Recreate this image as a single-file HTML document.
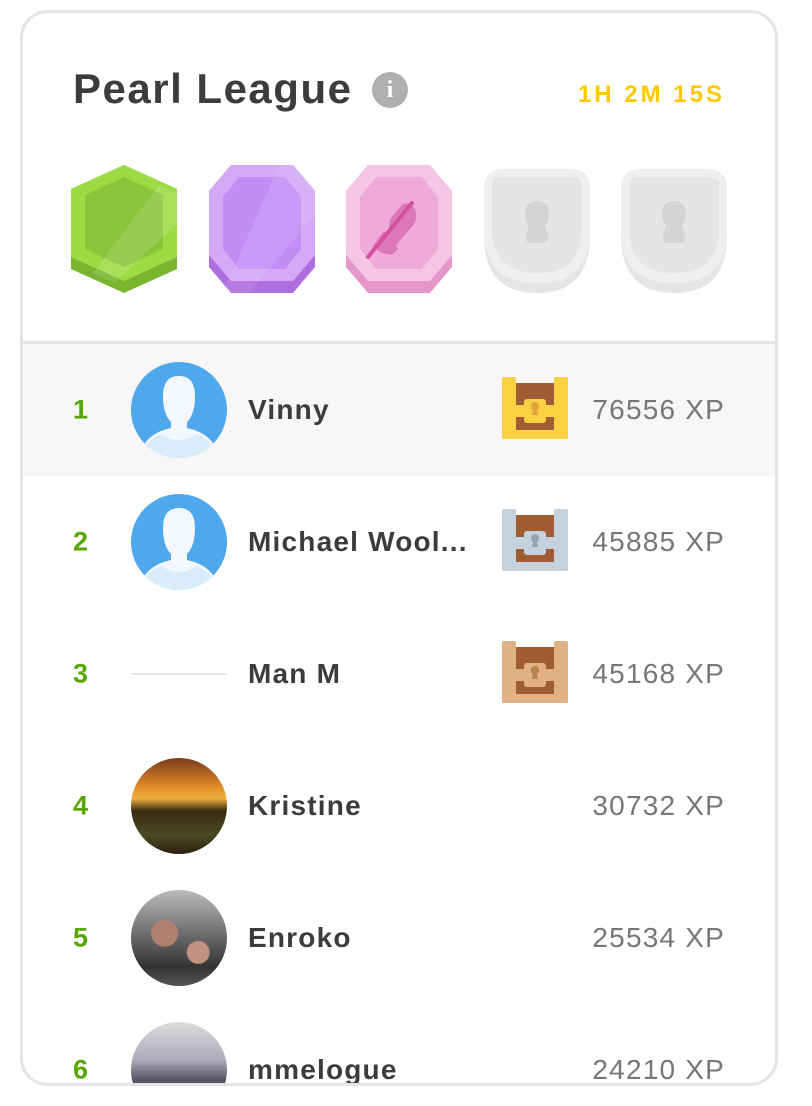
<!DOCTYPE html>
<html><head><meta charset="utf-8"><style>
*{margin:0;padding:0;box-sizing:border-box}
body{width:812px;height:1106px;background:#fff;font-family:"Liberation Sans",sans-serif;position:relative;overflow:hidden}
.card{position:absolute;left:20px;top:10px;width:758px;height:1076px;border:3px solid #e5e5e5;border-radius:28px;overflow:hidden}
.title{position:absolute;left:50px;top:52px;font-size:42px;font-weight:bold;color:#3c3c3c;letter-spacing:1.5px}
.info{position:absolute;left:349px;top:59px;width:36px;height:36px;border-radius:50%;background:#afafaf;color:#fff;font-weight:bold;font-size:24px;text-align:center;line-height:36px;font-family:"Liberation Serif",serif}
.timer{position:absolute;right:50px;top:68px;font-size:24px;font-weight:bold;color:#ffc800;letter-spacing:3px}
.badge{position:absolute;top:152px}
.div{position:absolute;left:0;right:0;top:328px;height:3px;background:#e5e5e5}
.row{position:absolute;left:0;right:0;height:132px}
.rank{position:absolute;left:50px;top:50%;transform:translateY(-50%);font-size:27px;font-weight:bold;color:#58a700}
.av{position:absolute;left:108px;top:18px;width:96px;height:96px;border-radius:50%;overflow:hidden}
.name{position:absolute;left:225px;top:50%;transform:translateY(-50%);font-size:28px;font-weight:bold;color:#3c3c3c;letter-spacing:1.2px}
.xp{position:absolute;right:50px;top:50%;transform:translateY(-50%);font-size:28px;color:#777;letter-spacing:1.2px}
.chest{position:absolute;left:479px;top:33px}
</style></head><body>
<div class="card">
<div class="title">Pearl League</div>
<div class="info">i</div>
<div class="timer">1H 2M 15S</div>

<svg class="badge" style="left:48px" width="106" height="128" viewBox="0 0 106 128">
<polygon points="53,0 106,24 106,104 53,128 0,104 0,24" fill="#79b52f"/>
<polygon points="53,0 106,24 106,92 53,116 0,92 0,24" fill="#9ddb45"/>
<polygon points="53,12 92,30 92,84 53,102 14,84 14,30" fill="#8ac43a"/>
<polygon points="88,20 106,28 106,58 44,118 22,108" fill="#fff" opacity="0.12"/>
</svg>
<svg class="badge" style="left:186px" width="106" height="128" viewBox="0 0 106 128">
<polygon points="22,0 84,0 106,26 106,102 84,128 22,128 0,102 0,26" fill="#ae6ee0"/>
<polygon points="22,0 84,0 106,26 106,90 84,116 22,116 0,90 0,26" fill="#d4a8f5"/>
<polygon points="30,12 76,12 92,32 92,84 76,104 30,104 14,84 14,32" fill="#c28ef5"/>
<polygon points="70,0 90,0 106,20 106,50 40,128 14,128" fill="#fff" opacity="0.1"/>
</svg>
<svg class="badge" style="left:323px" width="106" height="128" viewBox="0 0 106 128">
<polygon points="22,0 84,0 106,26 106,102 84,128 22,128 0,102 0,26" fill="#e697c9"/>
<polygon points="22,0 84,0 106,26 106,90 84,116 22,116 0,90 0,26" fill="#f5c6e3"/>
<polygon points="30,12 76,12 92,32 92,84 76,104 30,104 14,84 14,32" fill="#f0aad7"/>
<path d="M26,82 L38,66 L42,70 L44,54 L56,40 Q66,34 70,48 Q72,56 64,64 L50,80 L52,84 L46,90 L36,88 Z" fill="#dd78b8"/>
<line x1="22" y1="92" x2="66" y2="38" stroke="#d550a0" stroke-width="4" stroke-linecap="round"/>
</svg>
<svg class="badge" style="left:461px" width="106" height="128" viewBox="0 0 106 128">
<path d="M0,24 Q0,4 20,4 L86,4 Q106,4 106,24 L106,70 Q106,128 53,128 Q0,128 0,70Z" fill="#e5e5e5"/>
<path d="M0,24 Q0,4 20,4 L86,4 Q106,4 106,24 L106,66 Q106,118 53,118 Q0,118 0,66Z" fill="#efefef"/>
<path d="M8,20 Q8,12 18,12 L88,12 Q98,12 98,20 L98,64 Q98,108 53,108 Q8,108 8,64Z" fill="#e5e5e5"/>
<path d="M53,36 Q65,36 65,50 Q65,56 61,60 L64,70 Q65,78 59,78 L47,78 Q41,78 42,70 L45,60 Q41,56 41,50 Q41,36 53,36Z" fill="#d4d4d4"/>
</svg>
<svg class="badge" style="left:598px" width="106" height="128" viewBox="0 0 106 128">
<path d="M0,24 Q0,4 20,4 L86,4 Q106,4 106,24 L106,70 Q106,128 53,128 Q0,128 0,70Z" fill="#e5e5e5"/>
<path d="M0,24 Q0,4 20,4 L86,4 Q106,4 106,24 L106,66 Q106,118 53,118 Q0,118 0,66Z" fill="#efefef"/>
<path d="M8,20 Q8,12 18,12 L88,12 Q98,12 98,20 L98,64 Q98,108 53,108 Q8,108 8,64Z" fill="#e5e5e5"/>
<path d="M53,36 Q65,36 65,50 Q65,56 61,60 L64,70 Q65,78 59,78 L47,78 Q41,78 42,70 L45,60 Q41,56 41,50 Q41,36 53,36Z" fill="#d4d4d4"/>
</svg>

<div class="div"></div>

<div class="row" style="top:331px;background:#f7f7f7">
<div class="rank">1</div>
<div class="av"><svg width="96" height="96" viewBox="0 0 96 96"><rect width="96" height="96" fill="#4fa8ec"/><path d="M48,14 Q64,14 64,34 Q64,52 56,60 L56,66 Q84,72 88,96 L8,96 Q12,72 40,66 L40,60 Q32,52 32,34 Q32,14 48,14Z" fill="#f2f8fd"/><path d="M8,96 Q12,80 30,72 Q48,84 66,72 Q84,80 88,96Z" fill="#d8ecfa"/></svg></div>
<div class="name">Vinny</div>
<svg class="chest" width="66" height="62" viewBox="0 0 66 62"><g fill="#f9d142"><rect x="0" y="0" width="14" height="62" rx="2"/><rect x="52" y="0" width="14" height="62" rx="2"/><rect x="0" y="53" width="66" height="9" rx="2"/></g><rect x="14" y="6" width="38" height="47" fill="#a05d34"/><rect x="14" y="28" width="38" height="12" fill="#f9d142"/><rect x="22" y="22" width="22" height="24" rx="3" fill="#f9d142"/><path d="M33,25 Q37,25 37,30 Q37,32 35,33 L36,38 L30,38 L31,33 Q29,32 29,30 Q29,25 33,25Z" fill="#e2a33a"/></svg>
<div class="xp">76556 XP</div>
</div>

<div class="row" style="top:463px">
<div class="rank">2</div>
<div class="av"><svg width="96" height="96" viewBox="0 0 96 96"><rect width="96" height="96" fill="#4fa8ec"/><path d="M48,14 Q64,14 64,34 Q64,52 56,60 L56,66 Q84,72 88,96 L8,96 Q12,72 40,66 L40,60 Q32,52 32,34 Q32,14 48,14Z" fill="#f2f8fd"/><path d="M8,96 Q12,80 30,72 Q48,84 66,72 Q84,80 88,96Z" fill="#d8ecfa"/></svg></div>
<div class="name">Michael Wool...</div>
<svg class="chest" width="66" height="62" viewBox="0 0 66 62"><g fill="#c5d2de"><rect x="0" y="0" width="14" height="62" rx="2"/><rect x="52" y="0" width="14" height="62" rx="2"/><rect x="0" y="53" width="66" height="9" rx="2"/></g><rect x="14" y="6" width="38" height="47" fill="#a05d34"/><rect x="14" y="28" width="38" height="12" fill="#c5d2de"/><rect x="22" y="22" width="22" height="24" rx="3" fill="#c5d2de"/><path d="M33,25 Q37,25 37,30 Q37,32 35,33 L36,38 L30,38 L31,33 Q29,32 29,30 Q29,25 33,25Z" fill="#93a3b5"/></svg>
<div class="xp">45885 XP</div>
</div>

<div class="row" style="top:595px">
<div class="rank">3</div>
<div class="av"><div style="position:absolute;top:47px;left:0;width:96px;height:2px;background:#e6e6e6"></div></div>
<div class="name">Man M</div>
<svg class="chest" width="66" height="62" viewBox="0 0 66 62"><g fill="#dfb185"><rect x="0" y="0" width="14" height="62" rx="2"/><rect x="52" y="0" width="14" height="62" rx="2"/><rect x="0" y="53" width="66" height="9" rx="2"/></g><rect x="14" y="6" width="38" height="47" fill="#a05d34"/><rect x="14" y="28" width="38" height="12" fill="#dfb185"/><rect x="22" y="22" width="22" height="24" rx="3" fill="#dfb185"/><path d="M33,25 Q37,25 37,30 Q37,32 35,33 L36,38 L30,38 L31,33 Q29,32 29,30 Q29,25 33,25Z" fill="#b9824c"/></svg>
<div class="xp">45168 XP</div>
</div>

<div class="row" style="top:727px">
<div class="rank">4</div>
<div class="av" style="background:linear-gradient(180deg,#7a3a1a 0%,#e08a2a 30%,#f0b040 42%,#3a2a12 55%,#4a4a22 80%,#2a2010 100%)"></div>
<div class="name">Kristine</div>
<div class="xp">30732 XP</div>
</div>

<div class="row" style="top:859px">
<div class="rank">5</div>
<div class="av" style="background:radial-gradient(circle at 35% 45%,#b08070 0 16%,transparent 17%),radial-gradient(circle at 70% 65%,#c09080 0 12%,transparent 13%),linear-gradient(180deg,#bbb 0%,#777 40%,#333 80%,#555 100%)"></div>
<div class="name">Enroko</div>
<div class="xp">25534 XP</div>
</div>

<div class="row" style="top:991px">
<div class="rank">6</div>
<div class="av" style="background:linear-gradient(180deg,#ddd 0%,#aab 40%,#556 60%,#889 100%)"></div>
<div class="name">mmelogue</div>
<div class="xp">24210 XP</div>
</div>
</div>
</body></html>
